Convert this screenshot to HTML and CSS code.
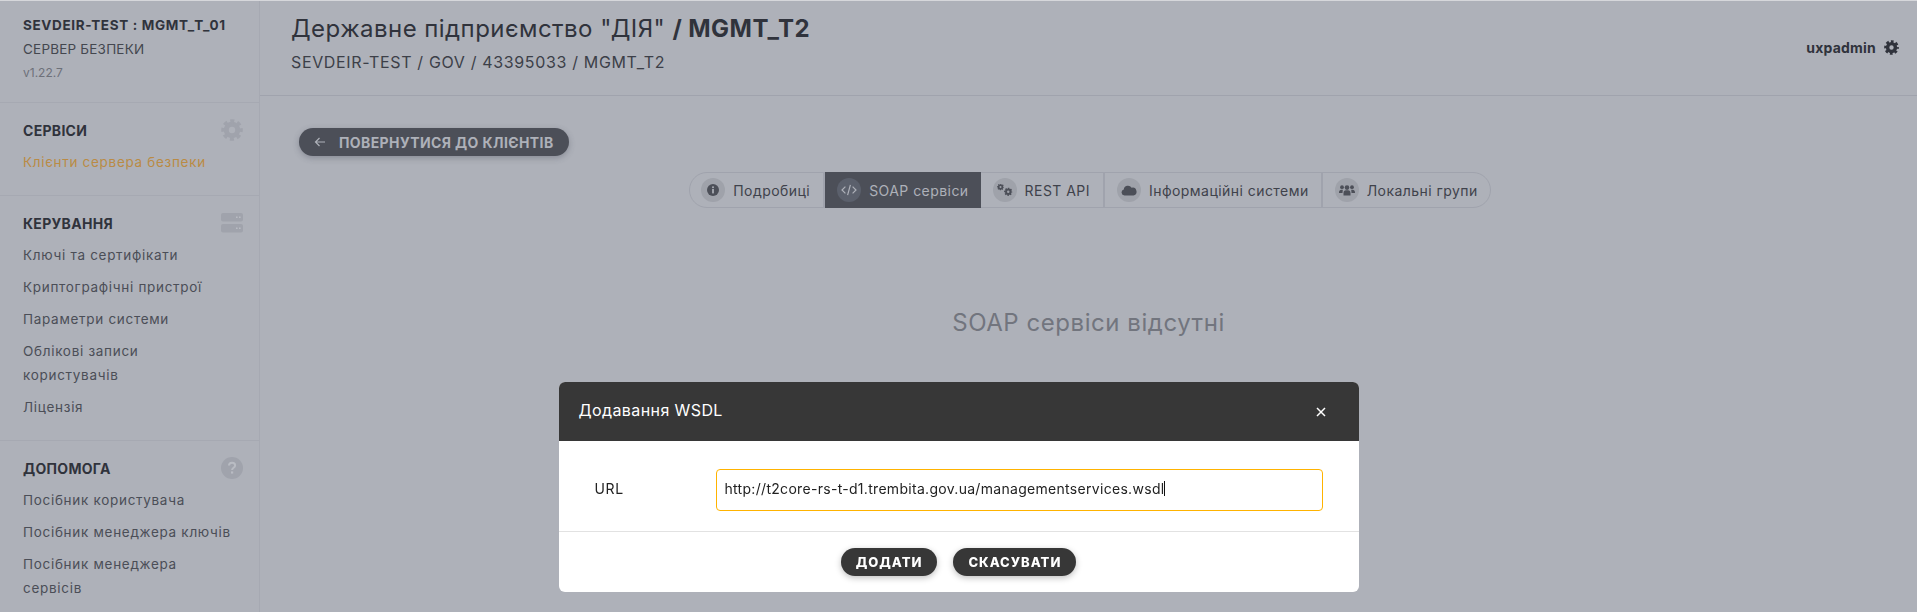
FILE: index.html
```html
<!DOCTYPE html>
<html lang="uk">
<head>
<meta charset="utf-8">
<title>SOAP сервіси</title>
<link rel="stylesheet" href="styles.css">
</head>
<body>
<svg class="defs" width="0" height="0" aria-hidden="true">
  <symbol id="gear" viewBox="0 0 24 24">
    <circle cx="12" cy="12" r="6.25" fill="none" stroke="currentColor" stroke-width="5.5"/>
    <circle cx="12" cy="12" r="9.5" fill="none" stroke="currentColor" stroke-width="4.5" stroke-dasharray="4.2 3.26" stroke-dashoffset="2.1"/>
  </symbol>
</svg>
<div class="app">
  <aside class="sidebar">
    <section class="side-head">
      <div class="side-title">SEVDEIR-TEST : MGMT_T_01</div>
      <div class="side-sub">СЕРВЕР БЕЗПЕКИ</div>
      <div class="side-ver">v1.22.7</div>
    </section>
    <section class="side-group">
      <div class="group-head"><span>СЕРВІСИ</span>
        <svg class="group-icon"><use href="#gear"/></svg>
      </div>
      <a class="nav-link active">Клієнти сервера безпеки</a>
    </section>
    <section class="side-group">
      <div class="group-head"><span>КЕРУВАННЯ</span>
        <svg class="group-icon" viewBox="0 0 22 20">
          <rect y="0" width="22" height="8.5" rx="2" fill="currentColor"/>
          <rect y="11" width="22" height="8.5" rx="2" fill="currentColor"/>
          <path d="M15 4.2h1.6M18 4.2h1.6M15 15.2h1.6M18 15.2h1.6" stroke="#b9bcc3" stroke-width="1.4"/>
        </svg>
      </div>
      <a class="nav-link">Ключі та сертифікати</a>
      <a class="nav-link">Криптографічні пристрої</a>
      <a class="nav-link">Параметри системи</a>
      <a class="nav-link">Облікові записи користувачів</a>
      <a class="nav-link">Ліцензія</a>
    </section>
    <section class="side-group last">
      <div class="group-head"><span>ДОПОМОГА</span>
        <svg class="group-icon" viewBox="0 0 22 22">
          <circle cx="11" cy="11" r="11" fill="currentColor"/>
          <path d="M8 8.6c0-1.7 1.3-2.8 3.1-2.8s3 1 3 2.6c0 2.4-3 2.4-3 4.6" fill="none" stroke="#b9bcc3" stroke-width="2"/>
          <rect x="10" y="14.4" width="2.2" height="2.2" fill="#b9bcc3"/>
        </svg>
      </div>
      <a class="nav-link">Посібник користувача</a>
      <a class="nav-link">Посібник менеджера ключів</a>
      <a class="nav-link">Посібник менеджера сервісів</a>
    </section>
  </aside>
  <div class="main">
    <header class="topbar">
      <div>
        <h1 class="page-title">Державне підприємство "ДІЯ" <b>/ MGMT_T2</b></h1>
        <div class="page-path">SEVDEIR-TEST / GOV / 43395033 / MGMT_T2</div>
      </div>
      <div class="user"><b>uxpadmin</b><svg class="user-gear"><use href="#gear"/></svg></div>
    </header>
    <div class="content">
      <a class="back-btn">
        <svg class="back-arrow" viewBox="0 0 12 12"><path d="M11 6H1.5M5.5 2 1.5 6l4 4" fill="none" stroke="currentColor" stroke-width="1.2"/></svg>
        ПОВЕРНУТИСЯ ДО КЛІЄНТІВ
      </a>
      <nav class="tabs">
        <a class="tab tab-first">
          <span class="tab-icon"><svg viewBox="0 0 16 12"><circle cx="8" cy="6" r="6" fill="currentColor"/><rect x="7" y="5" width="2" height="4.4" fill="#9fa2aa"/><rect x="7" y="2.4" width="2" height="1.7" fill="#9fa2aa"/></svg></span>
          <span class="tab-text">Подробиці</span>
        </a>
        <a class="tab tab-active">
          <span class="tab-icon"><svg viewBox="0 0 16 12"><path d="M4.4 2.6 1 6l3.4 3.4M11.6 2.6 15 6l-3.4 3.4M9.4.8 6.6 11.2" fill="none" stroke="currentColor" stroke-width="1.2"/></svg></span>
          <span class="tab-text">SOAP сервіси</span>
        </a>
        <a class="tab tab-rest">
          <span class="tab-icon"><svg viewBox="0 0 16 12"><use href="#gear" x="0" y="-.5" width="7" height="7"/><use href="#gear" x="7" y="3.5" width="8.5" height="8.5"/></svg></span>
          <span class="tab-text">REST API</span>
        </a>
        <a class="tab">
          <span class="tab-icon"><svg viewBox="0 0 16 12"><path d="M3.5 11.5A3 3 0 0 1 2.8 5.6 4.2 4.2 0 0 1 10.6 3.8 3.9 3.9 0 0 1 12.5 11.5Z" fill="currentColor"/></svg></span>
          <span class="tab-text">Інформаційні системи</span>
        </a>
        <a class="tab tab-last">
          <span class="tab-icon"><svg viewBox="0 0 16 12" fill="currentColor"><circle cx="3" cy="3.2" r="1.9"/><circle cx="13" cy="3.2" r="1.9"/><circle cx="8" cy="3.6" r="2.3"/><path d="M0 8.5c0-2 1-2.8 2.4-2.8h1.4L3.5 9H0zM16 8.5c0-2-1-2.8-2.4-2.8h-1.4l.3 3.3H16zM4.5 11.5V9c0-2 1-2.8 2.4-2.8h2.2c1.4 0 2.4.8 2.4 2.8v2.5z"/></svg></span>
          <span class="tab-text">Локальні групи</span>
        </a>
      </nav>
      <p class="empty">SOAP сервіси відсутні</p>
    </div>
  </div>
</div>
<div class="backdrop">
  <div class="modal">
    <div class="modal-head">
      <span>Додавання WSDL</span>
      <svg class="modal-close" viewBox="0 0 10 10"><path d="M1 1l8 8M9 1 1 9" stroke="currentColor" stroke-width="1.5"/></svg>
    </div>
    <div class="modal-body">
      <label class="field-label">URL</label>
      <div class="field-input">http://t2core-rs-t-d1.trembita.gov.ua/managementservices.wsdl<span class="caret"></span></div>
    </div>
    <div class="modal-foot">
      <a class="modal-btn">ДОДАТИ</a>
      <a class="modal-btn">СКАСУВАТИ</a>
    </div>
  </div>
</div>
</body>
</html>
```

FILE: styles.css
```css
* { box-sizing: border-box; }
html, body { margin: 0; height: 612px; overflow: hidden; }
body {
  background: #aeb1b9;
  border-top: 1px solid #d6d7db;
  color: #30333c;
  font-family: Inter, "Noto Sans", sans-serif;
  font-size: 14px;
}
.defs { position: absolute; }
.app { display: flex; height: 611px; }

.sidebar { flex: 0 0 260px; border-right: 1px solid #a6a9b2; overflow: hidden; }
.side-head { height: 102px; padding-top: 12px; padding-left: 23px; border-bottom: 1px solid #a6a9b2; }
.side-title { font-weight: 700; font-size: 13.5px; line-height: 24px; letter-spacing: .65px; }
.side-sub { font-size: 13.5px; line-height: 24px; letter-spacing: .2px; color: #44474f; }
.side-ver { font-size: 12px; line-height: 24px; color: #6d7079; }

.side-group { padding: 15px 16px 17px 23px; border-bottom: 1px solid #a6a9b2; }
.side-group.last { border-bottom: 0; }
.group-head {
  display: flex; justify-content: space-between; align-items: center;
  height: 24px; margin-bottom: 4px;
  font-weight: 700; font-size: 14px; letter-spacing: .3px;
}
.group-icon { width: 22px; height: 22px; color: #a0a3ac; }
.nav-link {
  display: block; width: 214px; padding: 4px 0;
  font-size: 13.5px; line-height: 24px; letter-spacing: .7px; color: #4b4e57;
}
.nav-link.active { color: #ba8b45; width: 220px; }

.main { flex: 1; min-width: 0; }
.topbar {
  height: 95px; padding: 7px 18px 0 31px; border-bottom: 1px solid #a0a3ad;
  display: flex; justify-content: space-between; align-items: flex-start;
}
.page-title { margin: 0; font-weight: 400; font-size: 24px; line-height: 42px; letter-spacing: .45px; color: #30333c; }
.page-title b { font-weight: 700; }
.page-path { font-size: 16px; line-height: 24px; letter-spacing: .65px; color: #3c3f48; }
.user { display: flex; align-items: center; gap: 8px; margin-top: 31px; font-size: 14px; letter-spacing: .2px; }
.user-gear { width: 15px; height: 15px; color: #30333c; }

.content { padding: 32px 39px 0; display: flex; flex-direction: column; }
.back-btn {
  align-self: flex-start; display: flex; align-items: center; gap: 13px;
  height: 28px; padding: 0 15px;
  background: #4c4f58; color: #aeb1b9; border-radius: 14px;
  box-shadow: 0 2px 6px rgba(50,54,70,.3);
  font-weight: 700; font-size: 14px; letter-spacing: .4px; white-space: nowrap;
}
.back-arrow { width: 12px; height: 12px; }

.tabs {
  align-self: center; display: flex; height: 36px;
  margin: 16px 0 0 3px;
  border: 1px solid #a0a3ad; border-radius: 18px;
}
.tab { display: flex; align-items: center; gap: 8px; padding: 0 12px; border-right: 2px solid #a0a3ad; color: #3f424b; font-size: 14px; letter-spacing: .45px; white-space: nowrap; }
.tab-first { padding: 0 13px 0 11px; }
.tab-rest { padding-right: 13px; }
.tab-last { border-right: 0; }
.tab-active { background: #4c4f58; color: #aeb1b9; border-right: 0; margin: -1px 0; }
.tab-icon { flex: 0 0 24px; height: 24px; border-radius: 50%; background: #9fa2aa; color: #4c4f58; display: flex; align-items: center; justify-content: center; }
.tab-icon svg { width: 16px; height: 12px; }
.tab-active .tab-icon { background: #5b606c; color: #aeb1b9; }

.empty { margin: 99px 0 0; text-align: center; font-size: 24px; line-height: 32px; letter-spacing: .55px; color: #72757e; }

.backdrop { position: fixed; inset: 0; display: flex; justify-content: center; align-items: flex-start; padding-top: 382px; }
.modal { width: 800px; height: 210px; background: #fff; border-radius: 6px; overflow: hidden; color: #222; display: flex; flex-direction: column; }
.modal-head {
  flex: 0 0 59px; background: #373737; color: #fff; padding: 0 33px 3px 20px;
  display: flex; align-items: center; justify-content: space-between;
  font-size: 16px; letter-spacing: .4px;
}
.modal-close { width: 10px; height: 10px; margin-top: 4px; }
.modal-body { flex: 0 0 91px; display: flex; align-items: center; padding: 8px 36px 0; border-bottom: 1px solid #e2e2e2; }
.field-label { flex: 0 0 121px; padding-bottom: 3px; font-size: 14px; letter-spacing: .6px; }
.field-input {
  flex: 1; height: 42px; display: flex; align-items: center; padding: 0 8px 3px;
  border: 1px solid #ffb300; border-radius: 4px;
  font-size: 14px; letter-spacing: .3px; color: #222;
}
.caret { width: 1px; height: 15px; background: #111; }
.modal-foot { flex: 1; display: flex; justify-content: center; align-items: flex-start; gap: 16px; padding-top: 16px; }
.modal-btn {
  height: 28px; display: flex; align-items: center; padding: 0 15px;
  background: #373737; color: #fff; border-radius: 14px;
  box-shadow: 0 2px 6px rgba(0,0,0,.25);
  font-weight: 800; font-size: 13px; letter-spacing: 1px;
}
```
